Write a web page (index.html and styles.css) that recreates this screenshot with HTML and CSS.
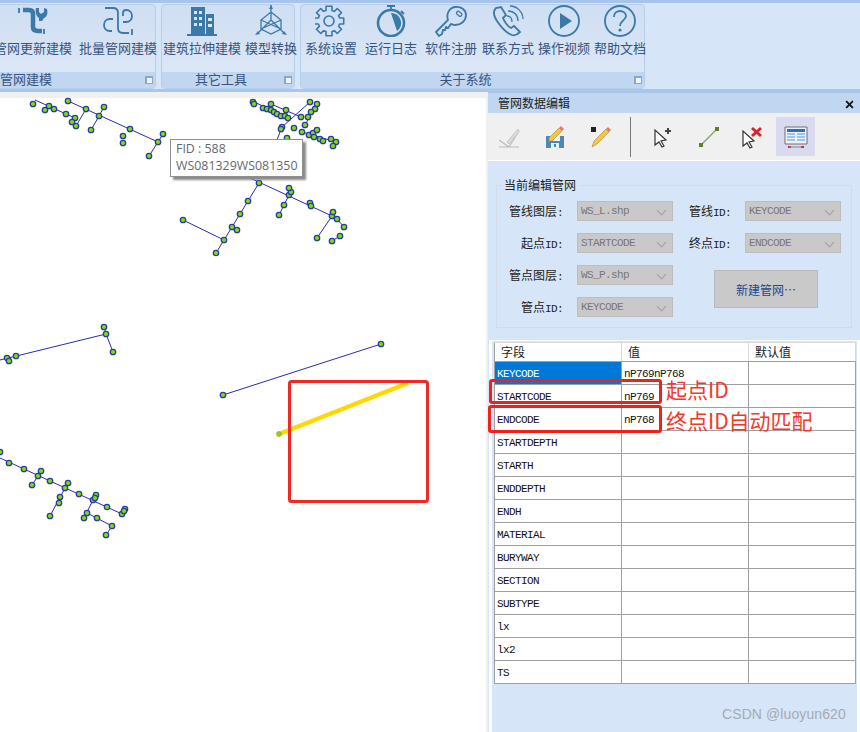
FILE: index.html
```html
<!DOCTYPE html>
<html lang="zh">
<head>
<meta charset="utf-8">
<title>管网数据编辑</title>
<link rel="stylesheet" href="styles.css">
</head>
<body>
<header class="ribbon">
  <section class="group group-pipe">
    <div class="items">
      <div class="item w-78"><svg class="ico" viewBox="0 0 32 32"><path class="thick" d="M6 5h6c3 0 4 2 4 4v13c0 3 2 4 5 4h4"/><path class="mid" d="M2 3v5M27 24v5"/><path class="tip" d="M19 3l3 0v4l2 2 3-2V3l3 1c1 4 0 8-3 9l-2 3h-3v-3c-3-2-4-6-3-10z"/></svg><span>管网更新建模</span></div>
      <div class="item w-78"><svg class="ico" viewBox="0 0 32 32"><path class="mid" d="M3 3h8c3 0 5 2 5 5v15c0 3 2 5 5 5h6M21 8c0-2 1-3 3-3 4 0 6 3 6 6s-2 6-6 6h-3M11 14H8c-4 0-6 3-6 6s2 6 6 6h2M30 24v6M21 8v3"/></svg><span>批量管网建模</span></div>
    </div>
    <div class="group-label">管网建模<i class="launch"></i></div>
  </section>
  <section class="group group-tools">
    <div class="items">
      <div class="item w-78"><svg class="ico solid" viewBox="0 0 32 32"><path d="M5 2h14v27H5zM20 9h8v20h-8zM1 29h30v2H1z"/><path class="win" d="M8 6h3v3H8zM13 6h3v3h-3zM8 12h3v3H8zM13 12h3v3h-3zM8 18h3v3H8zM13 18h3v3h-3zM22 13h4v3h-4zM22 19h4v3h-4z"/></svg><span>建筑拉伸建模</span></div>
      <div class="item w-52"><svg class="ico" viewBox="0 0 32 32"><path class="thin" d="M16 0v15M16 15L3 28M16 15l13 13M16 7l10 8v9l-10 5-10-5v-9zM6 15l20 9M26 15L6 24"/><path class="tip" d="M16 0l-2 4h4zM0 30l5-1-2-3zM32 30l-5-1 2-3z"/></svg><span>模型转换</span></div>
    </div>
    <div class="group-label">其它工具<i class="launch"></i></div>
  </section>
  <section class="group group-about">
    <div class="items">
      <div class="item w-52"><svg class="ico" viewBox="0 0 32 32"><polygon class="gear" transform="translate(14 16)" points="-3,-10.6 -3,-14.7 3,-14.7 3,-10.6 5.37,-9.62 8.27,-12.52 12.52,-8.27 9.62,-5.37 10.6,-3 14.7,-3 14.7,3 10.6,3 9.62,5.37 12.52,8.27 8.27,12.52 5.37,9.62 3,10.6 3,14.7 -3,14.7 -3,10.6 -5.37,9.62 -8.27,12.52 -12.52,8.27 -9.62,5.37 -10.6,3 -14.7,3 -14.7,-3 -10.6,-3 -9.62,-5.37 -12.52,-8.27 -8.27,-12.52 -5.37,-9.62"/><circle class="gear" cx="14" cy="16" r="5"/></svg><span>系统设置</span></div>
      <div class="item w-52"><svg class="ico" viewBox="0 0 32 32"><circle class="thick2" cx="16" cy="18" r="13"/><path class="mid" d="M12 1h8M16 1v4M26 6l3 3"/><path class="tip" d="M16 8a10 10 0 0 1 6 18z"/></svg><span>运行日志</span></div>
      <div class="item w-52"><svg class="ico" viewBox="0 0 32 32"><path class="mid" d="M1 27L13 15C11 9 14 3 20 2c6-1 11 3 11 8 0 6-5 10-11 10-2 0-3-1-4-1l-3 4-2-1-1 3H8l-1 4-3 2z"/><rect class="thin" x="21" y="7" width="6" height="3.4" rx="1.7" transform="rotate(40 24 9)"/></svg><span>软件注册</span></div>
      <div class="item w-52"><svg class="ico" viewBox="0 0 32 32"><path class="mid" d="M4 3c-3 3-3 7 1 13s9 12 15 14c3 1 6-1 8-3l-6-6-3 2c-3-1-7-7-8-10l3-3-5-8z"/><path class="thin" d="M15 11c3 0 5 2 5 6M16 6c6 0 10 4 10 10M18 1c7 0 13 6 13 13"/></svg><span>联系方式</span></div>
      <div class="item w-52"><svg class="ico" viewBox="0 0 32 32"><circle class="mid" cx="16" cy="16" r="15"/><path class="tip" d="M12 8l12 8-12 8z"/></svg><span>操作视频</span></div>
      <div class="item w-52"><svg class="ico" viewBox="0 0 32 32"><circle class="mid" cx="16" cy="16" r="15"/><path class="mid" d="M10 12c0-4 3-6 6-6s6 2 6 5c0 4-6 5-6 10"/><circle class="tip" cx="16" cy="25" r="1.6"/></svg><span>帮助文档</span></div>
    </div>
    <div class="group-label">关于系统<i class="launch"></i></div>
  </section>
</header>

<main class="main">
  <div class="map">
    <svg class="map-svg" viewBox="0 92 487 640">
      <g class="pipes">
        <path d="M35 100L75 118M68 101L158 142M86 109L76 126M99 116L104 107M99 116L91 130M158 142L149 156M158 142L163 134"/>
        <path d="M250 100L288 118M271 104L301 117M310 102L282 127L262 178M317 104L305 125M302 132L336 142M250 178L332 216M259 183L216 253M183 220L224 240M289 195L279 215M332 216L317 238M337 219L344 227M340 236L332 241"/>
        <path d="M0 360L106 334L113 352M106 334L104 327M223 395L381 344"/>
        <path d="M0 458L122 514M38 476L32 485M65 488L50 516M93 500L84 518M87 513L112 526L106 535M38 476L41 471M65 488L68 483M122 514L125 509"/>
      </g>
      <g class="nodes">
        <circle cx="33" cy="104"/><circle cx="45" cy="110"/><circle cx="49" cy="106"/><circle cx="54" cy="109"/><circle cx="66" cy="114"/><circle cx="75" cy="118"/><circle cx="72" cy="122"/><circle cx="76" cy="126"/><circle cx="68" cy="101"/><circle cx="86" cy="109"/><circle cx="104" cy="107"/><circle cx="99" cy="116"/><circle cx="91" cy="130"/><circle cx="130" cy="129"/><circle cx="123" cy="136"/><circle cx="123" cy="143"/><circle cx="158" cy="142"/><circle cx="163" cy="134"/><circle cx="149" cy="156"/>
        <circle cx="253" cy="102"/><circle cx="254" cy="104"/><circle cx="271" cy="104"/><circle cx="263" cy="108"/><circle cx="267" cy="109"/><circle cx="271" cy="110"/><circle cx="274" cy="112"/><circle cx="277" cy="114"/><circle cx="281" cy="116"/><circle cx="285" cy="116"/><circle cx="288" cy="118"/><circle cx="286" cy="110"/><circle cx="301" cy="117"/><circle cx="310" cy="102"/><circle cx="317" cy="104"/><circle cx="315" cy="109"/><circle cx="311" cy="112"/><circle cx="308" cy="117"/><circle cx="305" cy="125"/><circle cx="302" cy="132"/><circle cx="294" cy="128"/><circle cx="282" cy="127"/><circle cx="281" cy="129"/><circle cx="287" cy="138"/><circle cx="309" cy="135"/><circle cx="313" cy="133"/><circle cx="314" cy="137"/><circle cx="317" cy="130"/><circle cx="320" cy="139"/><circle cx="323" cy="141"/><circle cx="331" cy="139"/><circle cx="336" cy="142"/><circle cx="333" cy="146"/>
        <circle cx="259" cy="183"/><circle cx="248" cy="201"/><circle cx="240" cy="214"/><circle cx="232" cy="227"/><circle cx="237" cy="230"/><circle cx="224" cy="240"/><circle cx="216" cy="253"/><circle cx="183" cy="220"/><circle cx="289" cy="195"/><circle cx="291" cy="192"/><circle cx="289" cy="188"/><circle cx="284" cy="205"/><circle cx="279" cy="215"/><circle cx="310" cy="203"/><circle cx="311" cy="206"/><circle cx="332" cy="216"/><circle cx="333" cy="212"/><circle cx="337" cy="219"/><circle cx="344" cy="227"/><circle cx="340" cy="236"/><circle cx="332" cy="241"/><circle cx="317" cy="238"/>
        <circle cx="104" cy="327"/><circle cx="106" cy="334"/><circle cx="113" cy="352"/><circle cx="16" cy="356"/><circle cx="7" cy="358"/><circle cx="9" cy="361"/><circle cx="223" cy="395"/><circle cx="381" cy="344"/>
        <circle cx="9" cy="463"/><circle cx="24" cy="469"/><circle cx="38" cy="476"/><circle cx="41" cy="471"/><circle cx="32" cy="485"/><circle cx="50" cy="481"/><circle cx="65" cy="488"/><circle cx="68" cy="483"/><circle cx="60" cy="497"/><circle cx="59" cy="503"/><circle cx="50" cy="516"/><circle cx="79" cy="494"/><circle cx="93" cy="500"/><circle cx="96" cy="495"/><circle cx="95" cy="498"/><circle cx="107" cy="507"/><circle cx="122" cy="514"/><circle cx="125" cy="509"/><circle cx="124" cy="511"/><circle cx="87" cy="513"/><circle cx="84" cy="518"/><circle cx="97" cy="518"/><circle cx="112" cy="526"/><circle cx="106" cy="535"/><circle cx="0" cy="452"/>
      </g>
      <path class="selected" d="M279 434L408 383"/>
      <circle class="sel-end" cx="279" cy="434" r="2.4"/>
      <rect class="mark" x="289.5" y="381.5" width="138" height="120" rx="2"/>
    </svg>
    <div class="tooltip"><div>FID : 588</div><div>WS081329WS081350</div></div>
  </div>

  <aside class="panel">
    <div class="panel-title"><span>管网数据编辑</span><svg class="close" viewBox="0 0 8 8"><path d="M1 1l6 6M7 1L1 7"/></svg></div>
    <div class="toolbar">
      <button class="tool"><svg viewBox="0 0 24 24"><path class="t-grey" d="M2 22h20M12 22L2 15M12 22L22 6"/><path class="t-pale" d="M10 17L21 4l1 3-10 12z"/></svg></button>
      <button class="tool"><svg viewBox="0 0 24 24"><path class="t-floppy" d="M3 11h18v12H3z"/><path class="t-white" d="M7 11h10v5H7zM8 18h8v5H8z"/><path class="t-floppy" d="M11 19h2v3h-2z"/><path class="t-pencil" d="M6 13L16 3l3 3L9 16H6z"/><path class="t-tip" d="M16 3l2-2 3 3-2 2z"/></svg></button>
      <button class="tool"><svg viewBox="0 0 24 24"><path class="t-black" d="M2 2h5v5H2z"/><path class="t-pencil" d="M3 22l2-6L17 4l3 3L8 19z"/><path class="t-tip" d="M17 4l2-2 3 3-2 2z"/></svg></button>
      <i class="sep"></i>
      <button class="tool"><svg viewBox="0 0 24 24"><path class="t-arrow" d="M4 5l0 15 4-3 3 5 2-1-3-5 5-1z"/><path class="t-plus" d="M14 6h6M17 3v6"/></svg></button>
      <button class="tool"><svg viewBox="0 0 24 24"><path class="t-line" d="M4 20L20 4"/><path class="t-node" d="M2 18h4v4H2zM18 2h4v4h-4z"/></svg></button>
      <button class="tool"><svg viewBox="0 0 24 24"><path class="t-arrow" d="M3 6l0 15 4-3 3 5 2-1-3-5 5-1z"/><path class="t-x" d="M12 3l9 8M21 3l-9 8"/></svg></button>
      <button class="tool tool-on"><svg viewBox="0 0 24 24"><path class="t-frame" d="M1 2h22v17H1z"/><path class="t-head" d="M3 4h18v3H3z"/><path class="t-cells" d="M3 8h8v2H3zM13 8h8v2h-8zM3 11h8v2H3zM13 11h8v2h-8zM3 14h8v2H3zM13 14h8v2h-8z"/><path class="t-reddot" d="M4 21h3v2H4zM17 21h3v2h-3z"/><path class="t-greyline" d="M5 22h13"/></svg></button>
    </div>

    <div class="form">
      <div class="fieldset">
        <div class="legend">当前编辑管网</div>
        <div class="form-grid">
          <label class="lbl">管线图层<span class="mono">:</span></label><div class="sel">WS_L.shp</div>
          <label class="lbl">管线<span class="mono">ID:</span></label><div class="sel">KEYCODE</div>
          <label class="lbl">起点<span class="mono">ID:</span></label><div class="sel">STARTCODE</div>
          <label class="lbl">终点<span class="mono">ID:</span></label><div class="sel">ENDCODE</div>
          <label class="lbl">管点图层<span class="mono">:</span></label><div class="sel">WS_P.shp</div>
          <button class="new-btn">新建管网…</button>
          <label class="lbl">管点<span class="mono">ID:</span></label><div class="sel">KEYCODE</div>
        </div>
      </div>
    </div>

    <div class="grid-wrap">
      <table class="grid">
        <thead><tr><th>字段</th><th>值</th><th>默认值</th></tr></thead>
        <tbody>
          <tr><td class="cur">KEYCODE</td><td>nP769nP768</td><td></td></tr>
          <tr><td>STARTCODE</td><td>nP769</td><td></td></tr>
          <tr><td>ENDCODE</td><td>nP768</td><td></td></tr>
          <tr><td>STARTDEPTH</td><td></td><td></td></tr>
          <tr><td>STARTH</td><td></td><td></td></tr>
          <tr><td>ENDDEPTH</td><td></td><td></td></tr>
          <tr><td>ENDH</td><td></td><td></td></tr>
          <tr><td>MATERIAL</td><td></td><td></td></tr>
          <tr><td>BURYWAY</td><td></td><td></td></tr>
          <tr><td>SECTION</td><td></td><td></td></tr>
          <tr><td>SUBTYPE</td><td></td><td></td></tr>
          <tr><td>lx</td><td></td><td></td></tr>
          <tr><td>lx2</td><td></td><td></td></tr>
          <tr><td>TS</td><td></td><td></td></tr>
        </tbody>
      </table>
    </div>
  </aside>

  <div class="note-box box-start"></div>
  <div class="note-box box-end"></div>
  <div class="note note-start">起点ID</div>
  <div class="note note-end">终点ID自动匹配</div>
  <div class="watermark">CSDN @luoyun620</div>
</main>
</body>
</html>
```
FILE: styles.css
```css
* { box-sizing: border-box; }
html, body { margin: 0; padding: 0; }
body {
  width: 860px;
  height: 732px;
  overflow: hidden;
  background: #f0f0f0;
  font-family: "Noto Sans CJK SC", sans-serif;
  font-size: 12px;
}

/* ribbon */
.ribbon {
  height: 92px;
  display: flex;
  gap: 5px;
  padding-top: 1px;
  background: #d6e5f8;
  border-top: 3px solid #a6c4ec;
  border-bottom: 3px solid #a9c7ea;
  overflow: hidden;
}
.group {
  height: 85px;
  display: flex;
  flex-direction: column;
  border: 1px solid #b7cee9;
  border-radius: 4px;
  background: linear-gradient(#cfdef2, #dfe9f7);
}
.group-pipe { width: 246px; margin-left: -90px; }
.group-tools { width: 134px; }
.group-about { width: 345px; }
.items { flex: 1; display: flex; justify-content: flex-end; }
.group-tools .items { justify-content: flex-start; padding-left: 1px; gap: 4px; }
.group-pipe .items { gap: 7px; margin-right: -2px; }
.group-about .items { justify-content: flex-start; padding-left: 4px; gap: 8px; }
.group-about .item:nth-child(n+4) { margin-left: -3px; margin-right: -1px; }
.item {
  display: flex;
  flex-direction: column;
  align-items: center;
  flex: none;
  white-space: nowrap;
  font-size: 13px;
  line-height: 17px;
  color: #36547f;
}
.w-78 { width: 78px; }
.w-52 { width: 52px; }
.item span { margin-top: 2px; }
.ico { width: 32px; height: 32px; display: block; flex: none; fill: none; stroke: #3a79a8; stroke-width: 2; }
.ico .thick { stroke-width: 4.5; }
.ico .thick2 { stroke-width: 2.6; }
.ico .mid { stroke-width: 1.8; }
.ico .gear { stroke-width: 1.6; stroke-linejoin: round; }
.ico .thin { stroke-width: 1.3; }
.ico .tip { fill: #3a79a8; stroke: none; }
.ico.solid { fill: #3a79a8; stroke: none; }
.ico .win { fill: #dbe7f6; }
.group-label {
  height: 16px;
  position: relative;
  padding-right: 14px;
  background: #c1d6f0;
  border-radius: 0 0 3px 3px;
  text-align: center;
  font-size: 13px;
  line-height: 14px;
  color: #36547f;
}
.launch {
  position: absolute;
  right: 2px;
  top: 4px;
  width: 8px;
  height: 8px;
  background: #eef4fb;
  border: 1px solid #8fa6c2;
  border-top-width: 2px;
  border-left-width: 2px;
}

/* main */
.main {
  position: relative;
  height: 640px;
  display: flex;
  justify-content: space-between;
}
.map {
  position: relative;
  width: 486px;
  height: 640px;
  margin-top: 6px;
  background: #fff;
}
.map-svg {
  position: absolute;
  left: 0;
  top: -6px;
  width: 487px;
  height: 640px;
}
.pipes path { fill: none; stroke: #2b2bb0; stroke-width: 1; }
.nodes circle { r: 2.7px; fill: #7fe000; stroke: #2a3aa8; stroke-width: 1.3; }
.selected { fill: none; stroke: #ffd800; stroke-width: 4.5; }
.sel-end { fill: #7fe000; stroke: #b7a43a; stroke-width: 1; }
.mark { fill: none; stroke: #ee2a24; stroke-width: 3; }
.tooltip {
  position: absolute;
  left: 170px;
  top: 41px;
  width: 133px;
  height: 38px;
  padding-left: 5px;
  background: #fff;
  border: 1px solid #8f8f8f;
  box-shadow: 3px 3px 2px #8a8a8a;
  font-family: "Open Sans", sans-serif;
  font-size: 12.4px;
  line-height: 17px;
  color: #66676c;
}

/* panel */
.panel {
  width: 372px;
  height: 640px;
  background: #d6e5f8;
}
.panel-title {
  height: 21px;
  padding: 0 6px 0 10px;
  display: flex;
  justify-content: space-between;
  align-items: center;
  background: #c1d6f0;
  border-top: 1px solid #a9c4e8;
  color: #222;
  line-height: 16px;
}
.close { width: 9px; height: 9px; margin-top: 3px; stroke: #111; stroke-width: 1.6; }
.toolbar {
  height: 48px;
  padding: 4px 0 0 1px;
  display: flex;
  align-items: flex-start;
  background: #f0f0f0;
  border-bottom: 1px solid #fff;
}
.tool {
  width: 40px;
  height: 39px;
  padding: 0;
  margin-right: 6px;
  border: 0;
  background: none;
  display: flex;
  align-items: center;
  justify-content: center;
}
.tool svg { width: 24px; height: 24px; fill: none; }
.tool-on { width: 39px; background: #d9d9ef; margin-right: 0; }
.sep { width: 1px; height: 40px; margin: 0 12px 0 3px; background: #777; }
.tool:nth-of-type(5) { margin-right: 3px; }
.tool:nth-of-type(6) { margin-right: 4px; }
.t-grey { stroke: #b5bcc0; stroke-width: 1.2; }
.t-pale { fill: #d8dcde; stroke: #c2c6c8; }
.t-floppy { fill: #4e86b5; }
.t-white { fill: #eef3f7; }
.t-pencil { fill: #f2c64a; stroke: #a8892a; stroke-width: .6; }
.t-tip { fill: #e47a6a; }
.t-black { fill: #222; }
.t-arrow { fill: #fff; stroke: #333; stroke-width: 1.2; }
.t-plus { stroke: #444; stroke-width: 2; }
.t-line { stroke: #7da270; stroke-width: 1.3; }
.t-node { fill: #5e7f28; }
.t-x { stroke: #d9232a; stroke-width: 3; }
.t-frame { fill: #eef2f6; stroke: #6b7378; stroke-width: 1; }
.t-head { fill: #2473c2; }
.t-cells { fill: #9cc4ec; }
.t-reddot { fill: #d9232a; }
.t-greyline { stroke: #888; stroke-width: 1; }

.form { height: 179px; padding: 24px 8px 0; }
.fieldset {
  position: relative;
  width: 356px;
  height: 143px;
  border: 1px solid #d0dcea;
  padding-top: 15px;
}
.legend {
  position: absolute;
  left: 5px;
  top: -10px;
  padding: 0 3px 0 2px;
  background: #d6e5f8;
  color: #222;
  line-height: 18px;
}
.form-grid {
  display: grid;
  grid-template-columns: 66px 96px 44px 96px;
  grid-auto-rows: 20px;
  gap: 12px 14px;
}
.lbl {
  justify-self: end;
  white-space: nowrap;
  line-height: 20px;
  color: #222;
}
.mono {
  font-family: "Liberation Mono", monospace;
  font-size: 11px;
  letter-spacing: -.6px;
}
.sel {
  position: relative;
  padding-left: 3px;
  background: #c9c9c9;
  border: 1px solid #bdbdbd;
  font-family: "Liberation Mono", monospace;
  font-size: 11px;
  letter-spacing: -.6px;
  line-height: 19px;
  color: #777;
}
.sel::after {
  content: "";
  position: absolute;
  right: 7px;
  top: 5px;
  width: 6px;
  height: 6px;
  border-right: 1px solid #a2a2a2;
  border-bottom: 1px solid #a2a2a2;
  transform: rotate(45deg);
}
.new-btn {
  grid-column: 3 / 5;
  grid-row: 3 / 5;
  justify-self: start;
  align-self: start;
  width: 104px;
  height: 38px;
  margin: 5px 0 0 27px;
  padding: 0;
  border: 1px solid #b9b9b9;
  background: #c9c9c9;
  color: #174a96;
  font-family: inherit;
  font-size: 12px;
}

.grid-wrap {
  margin-left: 1px;
  height: 392px;
  padding: 1px 0 0 2px;
  border-top: 1px solid #fff;
  border-left: 3px solid #fff;
  border-right: 3px solid #fff;
}
.grid {
  width: 362px;
  table-layout: fixed;
  border-collapse: collapse;
  background: #fff;
  font-family: "Liberation Mono", "Noto Sans CJK SC", monospace;
  font-size: 11px;
  letter-spacing: -.6px;
  color: #111;
}
.grid th {
  height: 19px;
  padding: 0 0 0 6px;
  text-align: left;
  font-weight: normal;
  font-size: 12px;
  letter-spacing: 0;
  color: #222;
  border: 1px solid #d9d9d9;
  border-bottom-color: #a0a0a0;
}
.grid th:first-child { width: 127px; border-left-color: #a0a0a0; }
.grid th:nth-child(2) { width: 127px; }
.grid td {
  height: 23px;
  padding: 1px 0 0 2px;
  border: 1px solid #a0a0a0;
}
.grid .cur { background: #0078d7; color: #fff; }

/* annotations */
.note-box {
  position: absolute;
  left: 489px;
  width: 173px;
  border: 3px solid #f0201a;
  border-radius: 3px;
}
.box-start { top: 287px; height: 25px; }
.box-end { top: 313px; height: 28px; left: 488px; width: 174px; }
.note {
  position: absolute;
  left: 666px;
  font-size: 21px;
  line-height: 24px;
  color: #f0392b;
  white-space: nowrap;
}
.note-start { top: 285px; }
.note-end { top: 316px; }
.watermark {
  position: absolute;
  left: 722px;
  top: 614px;
  font-family: "Liberation Sans", sans-serif;
  font-size: 14px;
  letter-spacing: .1px;
  line-height: 17px;
  color: #a4abb3;
  white-space: nowrap;
}
```
